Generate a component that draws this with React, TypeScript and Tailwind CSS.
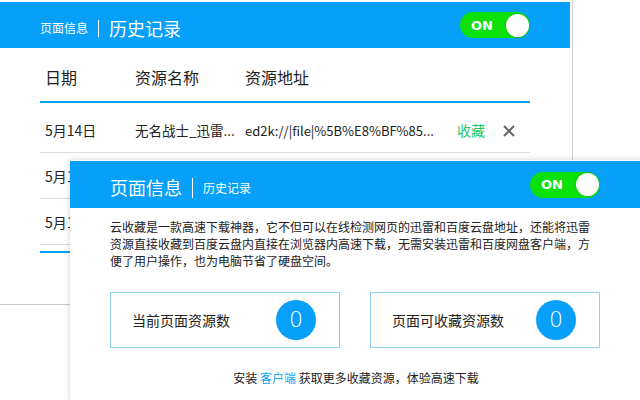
import React from "react";

const BLUE = "bg-[#069ffa]";

function Toggle() {
  return (
    <div className="flex h-[26px] w-[70px] items-center justify-between rounded-full bg-[#0be00b] pl-[11px] pr-[1px]">
      <span className="text-[13px] font-bold leading-none text-white [font-family:'DejaVu_Sans',sans-serif]">ON</span>
      <span className="h-[23px] w-[23px] rounded-full bg-white shadow-[0_0_2px_rgba(0,0,0,0.25)]" />
    </div>
  );
}

function Row({ date, covered }: { date: string; covered?: boolean }) {
  return (
    <div className="flex h-[46px] items-center border-b border-[#dcdcdc] pt-[2px] text-[14px] text-[#222]">
      <span className="w-[95px] pl-[5px]">{date}</span>
      <div className={covered ? "invisible flex items-center" : "flex items-center"}>
        <span className="w-[110px] text-[13.5px]">无名战士_迅雷...</span>
        <span className="w-[212px] text-[13px]">ed2k://|file|%5B%E8%BF%85...</span>
        <span className="w-[46px] text-[#26c26a]">收藏</span>
        <svg width="12" height="12" viewBox="0 0 12 12">
          <path d="M1 1 L11 11 M11 1 L1 11" stroke="#666" strokeWidth="2" />
        </svg>
      </div>
    </div>
  );
}

function Card({ label }: { label: string }) {
  return (
    <div className="flex h-[56px] w-[230px] items-center justify-between border border-[#8fd0fb] pl-[21px] pr-[23px]">
      <span className="text-[14px] text-[#222]">{label}</span>
      <span className={`flex h-[40px] w-[40px] items-center justify-center rounded-full ${BLUE} text-[22px] font-light leading-none text-white [font-family:'DejaVu_Sans',sans-serif]`}>
        0
      </span>
    </div>
  );
}

export default function App() {
  return (
    <div className="relative h-[400px] w-[640px] overflow-hidden bg-white [font-family:'Noto_Sans_CJK_SC','Noto_Sans',sans-serif]">
      {/* back panel */}
      <div className="h-[305px] w-[573px] border-r border-b border-[#cccccc] pt-[2px]">
        <div className={`flex h-[46px] w-[570px] items-center justify-between ${BLUE} pl-[40px] pr-[40px]`}>
          <div className="flex items-center pt-[6px] text-white">
            <span className="text-[12px]">页面信息</span>
            <span className="mx-[10px] h-[17px] w-px bg-white" />
            <span className="text-[18px]">历史记录</span>
          </div>
          <Toggle />
        </div>
        <div className="w-[530px] pl-[40px]">
          <div className="flex h-[55px] items-center border-b-2 border-[#069ffa] pt-[4px] text-[16px] text-[#222]">
            <span className="w-[95px] pl-[5px]">日期</span>
            <span className="w-[110px]">资源名称</span>
            <span>资源地址</span>
          </div>
          <div className="mt-[4px]">
            <Row date="5月14日" />
            <Row date="5月14日" covered />
            <Row date="5月14日" covered />
          </div>
          <div className="mt-[6px] h-[2px] bg-[#069ffa]" />
        </div>
      </div>

      {/* front popup */}
      <div className="absolute left-[70px] top-[160px] h-[242px] w-[572px] bg-white shadow-[0_0_6px_rgba(0,0,0,0.18)]">
        <div className={`mt-[1px] flex h-[47px] items-center justify-between ${BLUE} pl-[40px] pr-[42px]`}>
          <div className="flex items-center pt-[6px] text-white">
            <span className="text-[18px]">页面信息</span>
            <span className="mx-[10px] h-[20px] w-px bg-white" />
            <span className="text-[12px]">历史记录</span>
          </div>
          <Toggle />
        </div>
        <div className="px-[40px] pt-[10px]">
          <p className="w-[490px] text-[12px] leading-[17px] text-[#222]">
            云收藏是一款高速下载神器，它不但可以在线检测网页的迅雷和百度云盘地址，还能将迅雷资源直接收藏到百度云盘内直接在浏览器内高速下载，无需安装迅雷和百度网盘客户端，方便了用户操作，也为电脑节省了硬盘空间。
          </p>
          <div className="mt-[23px] flex gap-[30px]">
            <Card label="当前页面资源数" />
            <Card label="页面可收藏资源数" />
          </div>
          <div className="mt-[22px] text-center text-[12px] leading-[16px] text-[#222]">
            安装 <span className="text-[#069ffa]">客户端</span> 获取更多收藏资源，体验高速下载
          </div>
        </div>
      </div>
    </div>
  );
}
